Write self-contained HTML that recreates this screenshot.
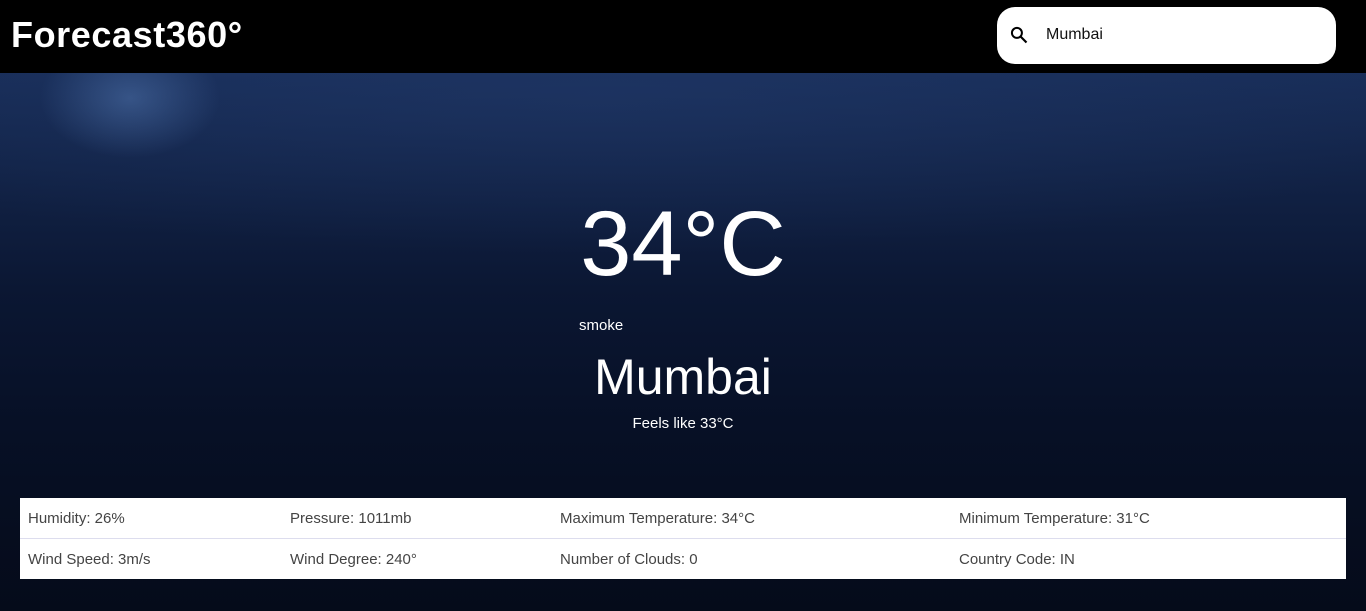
<!DOCTYPE html>
<html><head><meta charset="utf-8"><style>
*{margin:0;padding:0;box-sizing:border-box}
body{width:1366px;height:611px;overflow:hidden;font-family:"Liberation Sans",sans-serif;background:#050b1a;position:relative}
.hdr{position:absolute;left:0;top:0;width:1366px;height:73px;background:#000}
.logo{position:absolute;left:11px;top:14px;color:#fff;font-size:36px;font-weight:bold;letter-spacing:0.6px}
.search{position:absolute;left:997px;top:7px;width:339px;height:57px;background:#fff;border-radius:18px}
.search svg{position:absolute;left:12px;top:18px}
.search span{position:absolute;left:49px;top:19px;font-size:16px;color:#111}
.bg{position:absolute;left:0;top:73px;width:1366px;height:538px;
background:radial-gradient(ellipse 90px 60px at 130px 25px,rgba(90,130,190,.45),transparent),
radial-gradient(ellipse 900px 160px at 600px 20px,rgba(35,60,110,.45),transparent),
linear-gradient(#182d58 0%,#122347 18%,#0b1733 40%,#071026 65%,#050b1a 100%)}
.t{position:absolute;color:#fff;text-align:center}
table{position:absolute;left:20px;top:498px;width:1326px;height:81px;background:#fff;border-collapse:collapse;font-size:15px;color:#444}
td{padding-left:8px;height:40px}
tr:first-child td{border-bottom:1px solid #dde}
</style></head><body>
<div class="hdr"><div class="logo">Forecast360°</div>
<div class="search"><svg width="20" height="20" viewBox="0 0 24 24"><circle cx="9.5" cy="9.5" r="6" fill="none" stroke="#000" stroke-width="2.4"/><path d="M14 14l7 7" stroke="#000" stroke-width="2.6"/></svg><span>Mumbai</span></div></div>
<div class="bg"></div>
<div class="t" style="left:0;width:1366px;top:192px;font-size:92px;line-height:104px">34°C</div>
<div class="t" style="left:579px;top:317px;font-size:15px">smoke</div>
<div class="t" style="left:0;width:1366px;top:347px;font-size:50px;line-height:60px">Mumbai</div>
<div class="t" style="left:0;width:1366px;top:415px;font-size:15px">Feels like 33°C</div>
<table>
<tr><td style="width:262px">Humidity: 26%</td><td style="width:270px">Pressure: 1011mb</td><td style="width:399px">Maximum Temperature: 34°C</td><td>Minimum Temperature: 31°C</td></tr>
<tr><td>Wind Speed: 3m/s</td><td>Wind Degree: 240°</td><td>Number of Clouds: 0</td><td>Country Code: IN</td></tr>
</table>
</body></html>
